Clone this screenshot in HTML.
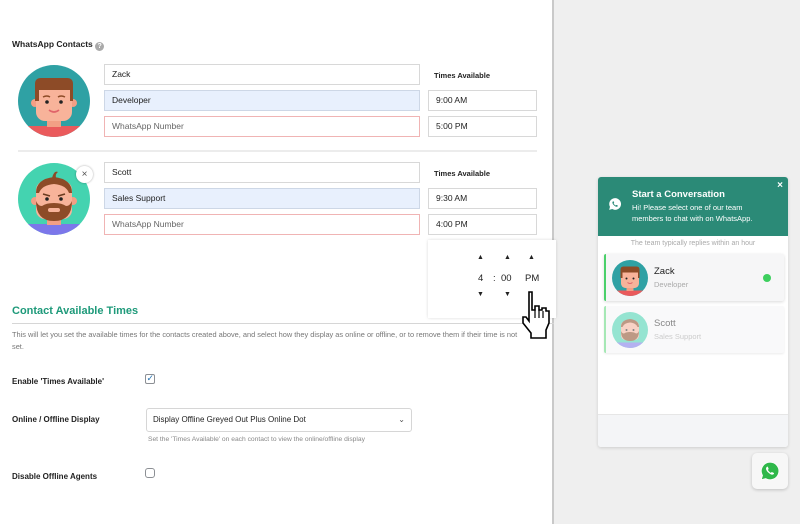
<!DOCTYPE html>
<html><head><meta charset="utf-8"><style>
*{box-sizing:border-box;margin:0;padding:0}
body{width:800px;height:524px;overflow:hidden;background:#efefef;font-family:"Liberation Sans",sans-serif;position:relative;color:#1e1e1e}
.left{position:absolute;left:0;top:0;width:554px;height:524px;background:#fff;border-right:2px solid #c9c9c9}
.a{position:absolute}
.inp{position:absolute;height:21px;border:1px solid #d8d8d8;background:#fff;font-size:8.5px;padding-left:7px;line-height:19px;color:#1e1e1e}
.blue{background:#e8f0fd;border-color:#cdd7e6}
.red{border-color:#f0b4b4;color:#666}
.lbl{position:absolute;font-size:8px;font-weight:bold;color:#222}
.t{position:absolute;font-size:8.5px}
.cb{position:absolute;width:10px;height:10px;border:1px solid #8c8f94;border-radius:2px;background:#fff}
</style></head><body>
<div class="left">
<div class="lbl" style="left:12px;top:39px;font-size:8.5px">WhatsApp Contacts <span style="display:inline-block;width:9px;height:9px;border-radius:50%;background:#aaa;color:#fff;font-size:7px;text-align:center;line-height:9px;vertical-align:-1px">?</span></div>

<svg class="a" style="left:18px;top:65px" width="72" height="72" viewBox="0 0 72 72"><defs><clipPath id="c1"><circle cx="36" cy="36" r="36"/></clipPath></defs><g clip-path="url(#c1)"><rect width="72" height="72" fill="#2fa1a4"/><rect x="8" y="61" width="56" height="14" fill="#ea5a5c"/><rect x="29" y="50" width="14" height="12" fill="#f29f85"/><circle cx="17" cy="38" r="4" fill="#f29f85"/><circle cx="55" cy="38" r="4" fill="#f29f85"/><rect x="18" y="18" width="36" height="38" rx="9" fill="#f8b39a"/><path d="M17 36V19q0-6 6-6h26q6 0 6 6v17h-3v-11h-31v11z" fill="#8d4b27"/><circle cx="29" cy="37" r="1.8" fill="#222"/><circle cx="43" cy="37" r="1.8" fill="#222"/><path d="M25 32q4-2 7 0M40 32q3-2 7 0" stroke="#8d4b27" stroke-width="1.5" fill="none"/><path d="M31 45q5 4 10 0" stroke="#e0646a" stroke-width="1.6" fill="none"/></g></svg>

<svg class="a" style="left:18px;top:163px" width="72" height="72" viewBox="0 0 72 72"><defs><clipPath id="c2"><circle cx="36" cy="36" r="36"/></clipPath></defs><g clip-path="url(#c2)"><rect width="72" height="72" fill="#44d3b0"/><rect x="8" y="61" width="56" height="14" fill="#7c77ea"/><rect x="29" y="50" width="14" height="12" fill="#f29f85"/><circle cx="17" cy="38" r="4" fill="#f29f85"/><circle cx="55" cy="38" r="4" fill="#f29f85"/><rect x="18" y="18" width="36" height="38" rx="9" fill="#f8b39a"/><path d="M18 30q0-14 18-16q18 2 18 16h-3q-3-8-15-9q-12 1-15 9z" fill="#8d4b27"/><path d="M34 15q2-8 6-6q-3 2-2 6z" fill="#8d4b27"/><path d="M18 38q0 20 18 20q18 0 18-20q-2 5-6 5q-4-3-12-3q-8 0-12 3q-4 0-6-5z" fill="#8d4b27"/><rect x="30" y="45" width="12" height="4" rx="2" fill="#f8b39a"/><circle cx="29" cy="36" r="1.8" fill="#222"/><circle cx="43" cy="36" r="1.8" fill="#222"/><path d="M25 31l7 2M40 33l7-2" stroke="#6b3a1f" stroke-width="1.6" fill="none"/></g></svg>
<div class="a" style="left:76px;top:166px;width:17px;height:17px;border-radius:50%;background:#fff;box-shadow:0 0 2px rgba(0,0,0,.35);font-size:10px;text-align:center;line-height:17px;color:#555">×</div>

<div class="inp" style="left:104px;top:64px;width:316px">Zack</div>
<div class="inp blue" style="left:104px;top:90px;width:316px">Developer</div>
<div class="inp red" style="left:104px;top:116px;width:316px">WhatsApp Number</div>
<div class="lbl" style="left:434px;top:71px;font-size:7.5px">Times Available</div>
<div class="inp" style="left:428px;top:90px;width:109px">9:00 AM</div>
<div class="inp" style="left:428px;top:116px;width:109px">5:00 PM</div>
<div class="a" style="left:18px;top:150px;width:519px;height:2px;background:#ececec"></div>
<div class="inp" style="left:104px;top:162px;width:316px">Scott</div>
<div class="inp blue" style="left:104px;top:188px;width:316px">Sales Support</div>
<div class="inp red" style="left:104px;top:214px;width:316px">WhatsApp Number</div>
<div class="lbl" style="left:434px;top:169px;font-size:7.5px">Times Available</div>
<div class="inp" style="left:428px;top:188px;width:109px">9:30 AM</div>
<div class="inp" style="left:428px;top:214px;width:109px">4:00 PM</div>

<div class="a" style="left:12px;top:305px;font-size:11px;font-weight:bold;color:#1e9a7a">Contact Available Times</div>
<div class="a" style="left:12px;top:323px;width:542px;height:1px;background:#d6d6d6"></div>
<div class="a" style="left:12px;top:329px;width:540px;font-size:7.4px;line-height:12px;color:#777;white-space:nowrap">This will let you set the available times for the contacts created above, and select how they display as online or offline, or to remove them if their time is not<br>set.</div>
<div class="lbl" style="left:12px;top:377px">Enable 'Times Available'</div>
<div class="cb" style="left:145px;top:374px"></div>
<div class="a" style="left:146.5px;top:373px;font-size:9px;color:#2271b1">✓</div>
<div class="lbl" style="left:12px;top:415px">Online / Offline Display</div>
<div class="a" style="left:146px;top:408px;width:266px;height:24px;border:1px solid #d6d6d6;border-radius:3px;font-size:8px;padding-left:6px;line-height:22px">Display Offline Greyed Out Plus Online Dot<span style="position:absolute;right:6px;top:0;font-size:8px;color:#555">⌄</span></div>
<div class="a" style="left:148px;top:436px;font-size:6.7px;color:#888">Set the 'Times Available' on each contact to view the online/offline display</div>
<div class="lbl" style="left:12px;top:472px">Disable Offline Agents</div>
<div class="cb" style="left:145px;top:468px;border-radius:3px"></div>
</div>

<div class="a" style="left:428px;top:240px;width:128px;height:78px;background:#fff;box-shadow:0 0 3px rgba(0,0,0,.15);font-size:9.5px;color:#222">
<div class="a" style="left:49px;top:14px;font-size:7px">▲</div><div class="a" style="left:76px;top:14px;font-size:7px">▲</div><div class="a" style="left:100px;top:14px;font-size:7px">▲</div>
<div class="a" style="left:50px;top:33px">4</div><div class="a" style="left:65px;top:33px">:</div><div class="a" style="left:73px;top:33px">00</div><div class="a" style="left:97px;top:33px">PM</div>
<div class="a" style="left:49px;top:51px;font-size:7px">▼</div><div class="a" style="left:76px;top:51px;font-size:7px">▼</div>
</div>
<svg class="a" style="left:519px;top:290px" width="36" height="50" viewBox="0 0 36 50"><path d="M10 2h3v18h3v-4h4v4h3v-2h4v3h3v12l-3 7v8h-15v-5l-8-10v-6h3l3 4z" fill="#fff" stroke="#000" stroke-width="1.6"/><path d="M16 20v8M20 20v8M24 21v7" stroke="#000" stroke-width="1.2"/></svg>

<div class="a" style="left:598px;top:177px;width:190px;height:270px;background:#fff;border-radius:3px;box-shadow:0 1px 3px rgba(0,0,0,.15);overflow:hidden">
<div class="a" style="left:0;top:0;width:190px;height:59px;background:#2b8a77;color:#fff">
<svg class="a" style="left:10px;top:20px" width="14" height="14" viewBox="0 0 24 24"><path d="M12 2a10 10 0 0 0-8.6 15L2 22l5.2-1.4A10 10 0 1 0 12 2z" fill="#fff"/><path d="M8.5 7.5c.4-.4 1-.3 1.2.2l.8 1.8c.1.4 0 .7-.3 1l-.6.6c.8 1.5 2 2.7 3.5 3.5l.6-.6c.3-.3.7-.4 1-.2l1.8.8c.5.2.6.8.2 1.2-1 1.2-2.5 1.2-4.5 0-2-1.2-3.300-2.6-4.2-4.4-.8-1.6-.6-3 .5-3.9z" fill="#2b8a77"/></svg>
<div class="a" style="left:34px;top:12px;font-size:9.5px;font-weight:bold">Start a Conversation</div>
<div class="a" style="left:34px;top:25px;font-size:7.5px;line-height:11px">Hi! Please select one of our team<br>members to chat with on WhatsApp.</div>
<div class="a" style="right:5px;top:3px;font-size:10px;font-weight:bold">×</div>
</div>
<div class="a" style="left:0;top:63px;width:190px;text-align:center;font-size:7px;color:#aaa">The team typically replies within an hour</div>
<div class="a" style="left:6px;top:77px;width:180px;height:47px;background:#f6f6f7;border-left:2px solid #4bd06a;box-shadow:0 1px 3px rgba(0,0,0,.15);border-radius:2px">
<svg class="a" style="left:6px;top:6px" width="36" height="36" viewBox="0 0 72 72"><defs><clipPath id="c3"><circle cx="36" cy="36" r="36"/></clipPath></defs><g clip-path="url(#c3)"><rect width="72" height="72" fill="#2fa1a4"/><rect x="8" y="61" width="56" height="14" fill="#ea5a5c"/><rect x="29" y="50" width="14" height="12" fill="#f29f85"/><rect x="18" y="18" width="36" height="38" rx="9" fill="#f8b39a"/><path d="M17 36V19q0-6 6-6h26q6 0 6 6v17h-3v-11h-31v11z" fill="#8d4b27"/><circle cx="29" cy="37" r="2" fill="#222"/><circle cx="43" cy="37" r="2" fill="#222"/><path d="M31 45q5 4 10 0" stroke="#e0646a" stroke-width="2" fill="none"/></g></svg>
<div class="a" style="left:48px;top:12px;font-size:9.5px">Zack</div>
<div class="a" style="left:48px;top:26px;font-size:7.5px;color:#aaa">Developer</div>
<div class="a" style="left:157px;top:20px;width:8px;height:8px;border-radius:50%;background:#3dcf5e"></div>
</div>
<div class="a" style="left:6px;top:129px;width:180px;height:47px;background:#f9f9fa;border-left:2px solid #a6e8b5;box-shadow:0 1px 2px rgba(0,0,0,.08);border-radius:2px">
<svg class="a" style="left:6px;top:6px;opacity:.55" width="36" height="36" viewBox="0 0 72 72"><defs><clipPath id="c4"><circle cx="36" cy="36" r="36"/></clipPath></defs><g clip-path="url(#c4)"><rect width="72" height="72" fill="#44d3b0"/><rect x="8" y="61" width="56" height="14" fill="#7c77ea"/><rect x="18" y="18" width="36" height="38" rx="9" fill="#f8b39a"/><path d="M18 30q0-14 18-16q18 2 18 16h-3q-3-8-15-9q-12 1-15 9z" fill="#8d4b27"/><path d="M18 38q0 20 18 20q18 0 18-20q-2 5-6 5q-4-3-12-3q-8 0-12 3q-4 0-6-5z" fill="#8d4b27"/><circle cx="29" cy="36" r="2" fill="#222"/><circle cx="43" cy="36" r="2" fill="#222"/></g></svg>
<div class="a" style="left:48px;top:12px;font-size:9.5px;color:#888">Scott</div>
<div class="a" style="left:48px;top:26px;font-size:7.5px;color:#ccc">Sales Support</div>
</div>
<div class="a" style="left:0;top:237px;width:190px;height:33px;background:#f4f5f7;border-top:1px solid #e6e6e6"></div>
</div>
<div class="a" style="left:752px;top:453px;width:36px;height:36px;background:#f7f7f7;border-radius:5px;box-shadow:0 1px 3px rgba(0,0,0,.2)">
<svg class="a" style="left:8px;top:8px" width="20" height="20" viewBox="0 0 24 24"><path d="M12 1.5a10.5 10.5 0 0 0-9 15.8L1.5 22.5l5.4-1.4A10.5 10.5 0 1 0 12 1.5z" fill="#2fb84a" stroke="#fff" stroke-width="1"/><path d="M8.3 7c.4-.4 1-.3 1.2.2l.8 1.9c.1.4 0 .7-.3 1l-.6.6c.8 1.5 2 2.7 3.5 3.5l.6-.6c.3-.3.7-.4 1-.2l1.9.8c.5.2.6.8.2 1.2-1 1.2-2.5 1.3-4.6 0-2-1.2-3.4-2.6-4.300-4.4-.8-1.6-.6-3.1.6-4z" fill="#fff"/></svg>
</div>
</body></html>
